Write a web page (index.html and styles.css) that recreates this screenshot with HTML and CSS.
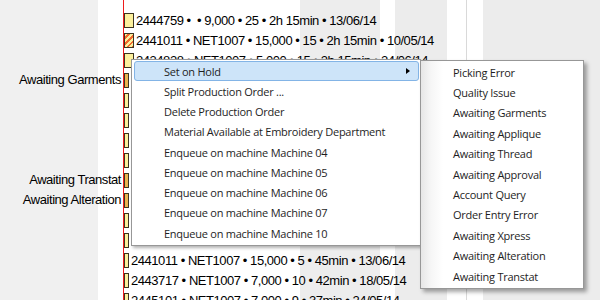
FILE: index.html
```html
<!DOCTYPE html>
<html>
<head>
<meta charset="utf-8">
<link rel="stylesheet" href="styles.css">
</head>
<body>
<div class="screen">
  <div class="labels">
    <div class="lrow"></div>
    <div class="lrow"></div>
    <div class="lrow"></div>
    <div class="lrow">Awaiting Garments</div>
    <div class="lrow"></div>
    <div class="lrow"></div>
    <div class="lrow"></div>
    <div class="lrow"></div>
    <div class="lrow">Awaiting Transtat</div>
    <div class="lrow">Awaiting Alteration</div>
    <div class="lrow"></div>
    <div class="lrow"></div>
    <div class="lrow"></div>
    <div class="lrow"></div>
    <div class="lrow"></div>
  </div>
  <div class="timeline">
    <div class="trow"><span class="bar wide"></span><span class="txt">2444759 •  • 9,000 • 25 • 2h 15min • 13/06/14</span></div>
    <div class="trow"><span class="bar wide hatched"></span><span class="txt">2441011 • NET1007 • 15,000 • 15 • 2h 15min • 10/05/14</span></div>
    <div class="trow"><span class="bar wide"></span><span class="txt">2434828 • NET1007 • 5,000 • 15 • 2h 15min • 24/06/14</span></div>
    <div class="trow"><span class="bar narrow orange"></span></div>
    <div class="trow"><span class="bar narrow"></span></div>
    <div class="trow"><span class="bar narrow"></span></div>
    <div class="trow"><span class="bar narrow"></span></div>
    <div class="trow"><span class="bar narrow"></span></div>
    <div class="trow"><span class="bar narrow orange"></span></div>
    <div class="trow"><span class="bar narrow orange"></span></div>
    <div class="trow"><span class="bar narrow"></span></div>
    <div class="trow"><span class="bar narrow"></span></div>
    <div class="trow"><span class="bar narrow"></span><span class="txt">2441011 • NET1007 • 15,000 • 5 • 45min • 13/06/14</span></div>
    <div class="trow"><span class="bar narrow"></span><span class="txt">2443717 • NET1007 • 7,000 • 10 • 42min • 18/05/14</span></div>
    <div class="trow"><span class="bar narrow"></span><span class="txt">2445101 • NET1007 • 7,000 • 9 • 37min • 24/05/14</span></div>
  </div>

  <div class="menu">
    <div class="item active"><span>Set on Hold</span><span class="arrow"></span></div>
    <div class="item"><span>Split Production Order ...</span></div>
    <div class="item"><span>Delete Production Order</span></div>
    <div class="item"><span>Material Available at Embroidery Department</span></div>
    <div class="item"><span>Enqueue on machine Machine 04</span></div>
    <div class="item"><span>Enqueue on machine Machine 05</span></div>
    <div class="item"><span>Enqueue on machine Machine 06</span></div>
    <div class="item"><span>Enqueue on machine Machine 07</span></div>
    <div class="item"><span>Enqueue on machine Machine 10</span></div>
  </div>

  <div class="submenu">
    <div class="sitem">Picking Error</div>
    <div class="sitem">Quality Issue</div>
    <div class="sitem">Awaiting Garments</div>
    <div class="sitem">Awaiting Applique</div>
    <div class="sitem">Awaiting Thread</div>
    <div class="sitem">Awaiting Approval</div>
    <div class="sitem">Account Query</div>
    <div class="sitem">Order Entry Error</div>
    <div class="sitem">Awaiting Xpress</div>
    <div class="sitem">Awaiting Alteration</div>
    <div class="sitem">Awaiting Transtat</div>
  </div>
</div>
</body>
</html>
```

FILE: styles.css
```css
* { box-sizing: border-box; }
html, body { margin: 0; padding: 0; }
body { width: 600px; height: 300px; overflow: hidden; background: #fff; }

.screen {
  position: relative;
  width: 600px;
  height: 300px;
  overflow: hidden;
  display: flex;
  font-family: "Liberation Sans", Arial, sans-serif;
  font-size: 13px;
  color: #000;
}

.labels {
  width: 123px;
  flex: none;
  padding-top: 10px;
  background: linear-gradient(to right, #f0f0f0 0 98px, #fff 98px);
}
.lrow {
  height: 20px;
  line-height: 20px;
  text-align: right;
  padding-right: 2px;
  white-space: nowrap;
  letter-spacing: -0.45px;
}

.timeline {
  flex: 1;
  padding-top: 10px;
  border-left: 1px solid #ee1c1c;
  background: linear-gradient(to right,
    #fff 0 176px,
    #ededed 176px 256px,
    #fff 256px 271px,
    #ececec 271px 323px,
    #fff 323px 342px,
    #d9d9d9 342px 343px,
    #fff 343px 359px,
    #ececec 359px);
}
.trow {
  height: 20px;
  display: flex;
  align-items: center;
  white-space: pre;
}
.bar {
  flex: none;
  height: 15px;
  border: 1px solid #3b3320;
  background: #fcf09c;
}
.bar.wide { width: 10px; }
.bar.narrow { width: 5px; }
.bar.orange { background: #eab452; }
.bar.hatched {
  background: repeating-linear-gradient(135deg, #fcf09c 0 2px, #f26a2e 2px 4px);
}
.txt {
  margin-left: 2px;
  letter-spacing: -0.45px;
}

.menu {
  position: absolute;
  left: 131px;
  top: 59px;
  width: 290px;
  height: 187px;
  padding: 1px;
  border: 1px solid #979797;
  background: #fff;
  box-shadow: 2px 2px 3px rgba(0, 0, 0, 0.3);
  font-family: "Open Sans", "Noto Sans", sans-serif;
  font-size: 11px;
  color: #1e1e1e;
}
.item {
  height: 20.25px;
  margin-left: 1px;
  padding-left: 29px;
  padding-right: 8px;
  border: 1px solid transparent;
  border-radius: 3px;
  display: flex;
  align-items: center;
  white-space: nowrap;
  letter-spacing: -0.25px;
}
.item.active {
  background: #cde4f9;
  border-color: #83b4e6;
}
.arrow {
  margin-left: auto;
  width: 0;
  height: 0;
  border-left: 4px solid #000;
  border-top: 3.5px solid transparent;
  border-bottom: 3.5px solid transparent;
}

.submenu {
  position: absolute;
  left: 420px;
  top: 60px;
  width: 164px;
  height: 229px;
  padding: 1px;
  border: 1px solid #979797;
  background: linear-gradient(to right, #e6e6e6 0, #f6f6f6 10px, #fff 22px);
  box-shadow: 3px 3px 4px rgba(0, 0, 0, 0.35);
  font-family: "Open Sans", "Noto Sans", sans-serif;
  font-size: 11px;
  color: #1e1e1e;
}
.sitem {
  height: 20.4px;
  padding-left: 31px;
  display: flex;
  align-items: center;
  white-space: nowrap;
  letter-spacing: -0.25px;
}
```
